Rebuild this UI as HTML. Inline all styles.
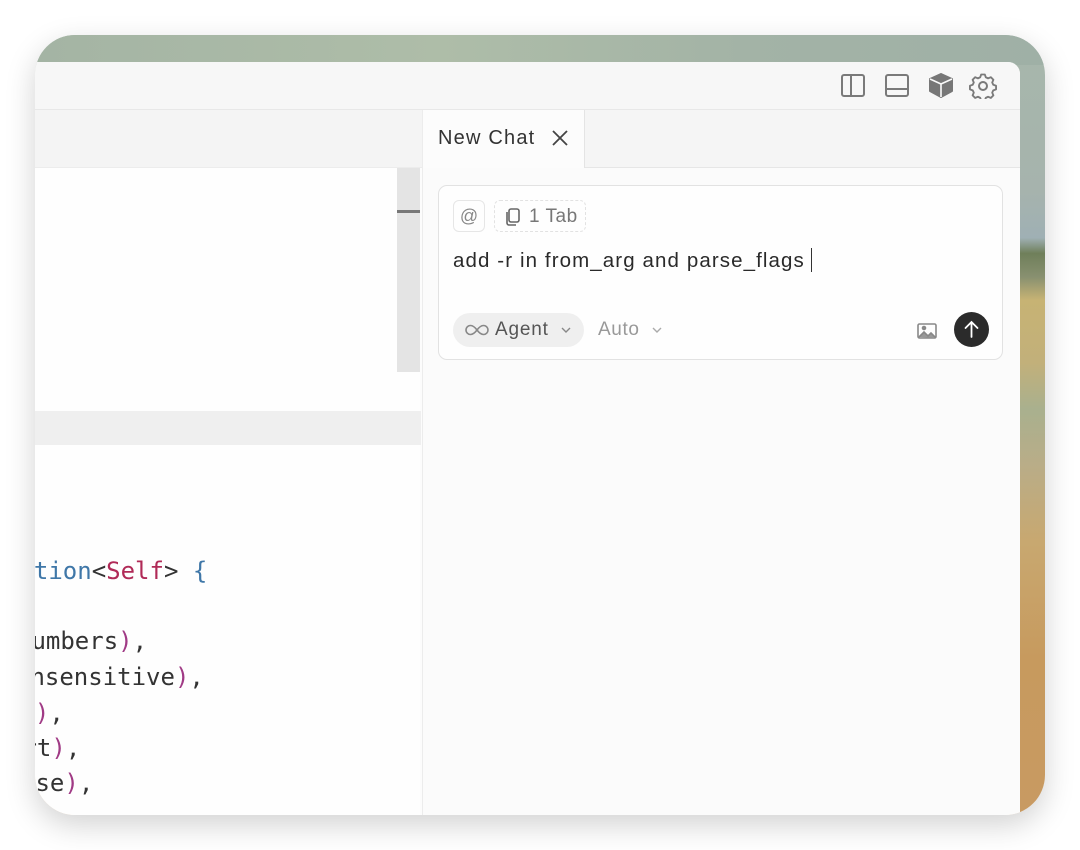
<!DOCTYPE html>
<html><head><meta charset="utf-8"><style>
*{margin:0;padding:0;box-sizing:border-box}
body{width:1080px;height:850px;background:#fff;position:relative;overflow:hidden;font-family:"Liberation Sans",sans-serif}
.frame{position:absolute;left:35px;top:35px;width:1010px;height:780px;border-radius:40px;overflow:hidden;
background:linear-gradient(180deg,#a7b7ab 0%,#a6b3ad 20%,#9fb0b4 26%,#6f7f5a 28%,#889070 31%,#c7b374 34%,#c2b07a 42%,#a9b08e 48%,#b9ad88 55%,#c8a870 65%,#c79a5e 80%,#c89a62 100%);
box-shadow:0 10px 30px rgba(0,0,0,.18)}
.frame:before{content:"";position:absolute;left:0;top:0;right:0;height:30px;background:linear-gradient(90deg,#a4b4a4,#aebda8 40%,#a3b3a6 70%,#9fb0a6)}
.win{position:absolute;left:0;top:27px;width:985px;height:753px;background:#fcfcfc;border-top-right-radius:12px;overflow:hidden}
.title{position:absolute;left:0;top:0;width:985px;height:48px;background:#f7f7f7;border-bottom:1px solid #e8e8e8}
.tabbar{position:absolute;left:0;top:48px;width:387px;height:58px;background:#f4f4f4;border-bottom:1px solid #ececec}
.editor{position:absolute;left:0;top:106px;width:385px;height:647px;background:#fefefe}
.sb{position:absolute;left:362px;top:106px;width:23px;height:204px;background:#e4e4e4}
.sb i{position:absolute;left:0;top:42px;width:23px;height:3px;background:#777}
.band{position:absolute;left:0;top:349px;width:386px;height:34px;background:#efefef}
.chat{position:absolute;left:387px;top:48px;width:598px;height:705px;background:#fbfbfb;border-left:1px solid #ececec}
.ctab{position:absolute;left:0;top:0;width:162px;height:58px;background:#fcfcfc;border-right:1px solid #e4e4e4;font-size:20px;color:#333;padding:17px 0 0 15px;letter-spacing:1.2px}
.ctabrest{position:absolute;left:162px;top:0;right:0;height:58px;background:#f5f5f5;border-bottom:1px solid #e6e6e6}
.box{position:absolute;left:15px;top:75px;width:565px;height:175px;border:1px solid #e2e2e2;border-radius:9px;background:#fefefe}
.code{position:absolute;font-family:"DejaVu Sans Mono","Liberation Mono",monospace;font-size:24px;color:#333;white-space:pre;line-height:30px}
.b{color:#3f77a8}.r{color:#b02a57}.p{color:#a03a85}
</style></head><body>
<div class="frame">
<div class="win">
 <div class="title">
  <svg style="position:absolute;left:806px;top:11px" width="160" height="26" viewBox="0 0 160 26" fill="none" stroke="#7a7a7a" stroke-width="2">
   <rect x="1" y="2" width="22" height="21" rx="2"/><line x1="10" y1="2" x2="10" y2="23"/>
   <rect x="45" y="2" width="22" height="21" rx="2"/><line x1="45" y1="16" x2="67" y2="16"/>
   <path d="M100 1 L111 6 L111 18 L100 24 L89 18 L89 6 Z" fill="#777" stroke="#777" stroke-linejoin="round"/>
   <path d="M89 6 L100 11 L111 6 M100 11 L100 24" stroke="#fafafa" stroke-width="1.6"/>
   <circle cx="142" cy="13" r="4"/>
   <path d="M140 1.5h4l1 3 2.5 1.2 3-1.3 2.8 2.8-1.3 3 1.2 2.5 3 1v4l-3 1-1.2 2.5 1.3 3-2.8 2.8-3-1.3-2.5 1.2-1 3h-4l-1-3-2.5-1.2-3 1.3-2.8-2.8 1.3-3-1.2-2.5-3-1v-4l3-1 1.2-2.5-1.3-3 2.8-2.8 3 1.3 2.5-1.2z" transform="translate(142 13) scale(.92) translate(-142 -13) translate(0 -1)" stroke-linejoin="round"/>
  </svg>
 </div>
 <div class="tabbar"></div>
 <div class="editor"></div>
 <div class="sb"><i></i></div>
 <div class="band"></div>
 <div class="code" style="left:-30px;top:494px"><span class="b">Option</span>&lt;<span class="r">Self</span>&gt; <span class="b">{</span></div>
 <div class="code" style="left:-18px;top:564px">Numbers<span class="p">)</span>,</div>
 <div class="code" style="left:-19px;top:600px">Insensitive<span class="p">)</span>,</div>
 <div class="code" style="left:-29px;top:636px">nt<span class="p">)</span>,</div>
 <div class="code" style="left:-27px;top:671px">art<span class="p">)</span>,</div>
 <div class="code" style="left:-14px;top:706px">ose<span class="p">)</span>,</div>
 <div class="chat">
  <div class="ctab">New Chat<span style="position:absolute;left:128px;top:19px"><svg width="18" height="18" viewBox="0 0 18 18" stroke="#444" stroke-width="1.8"><path d="M2 2L16 16M16 2L2 16"/></svg></span></div>
  <div class="ctabrest"></div>
  <div class="box">
   <div style="position:absolute;left:14px;top:14px;width:32px;height:32px;border:1px solid #e6e6e6;border-radius:6px;color:#888;font-size:18px;text-align:center;line-height:30px">@</div>
   <div style="position:absolute;left:55px;top:14px;width:92px;height:32px;border:1px dashed #e2e2e2;border-radius:6px;color:#777;font-size:19px;line-height:31px;padding-left:34px;letter-spacing:.5px">1 Tab
    <svg style="position:absolute;left:9px;top:7px" width="17" height="19" viewBox="0 0 17 19" fill="none" stroke="#666" stroke-width="1.6"><rect x="5" y="1" width="10" height="13" rx="2"/><path d="M3 4v11a2 2 0 0 0 2 2h7"/></svg></div>
   <div style="position:absolute;left:14px;top:62px;font-size:20.5px;letter-spacing:1.1px;color:#2a2a2a">add -r in from_arg and parse_flags<span style="display:inline-block;width:1px;height:24px;background:#333;margin-left:6px;vertical-align:-5px"></span></div>
   <div style="position:absolute;left:14px;top:127px;width:131px;height:34px;border-radius:17px;background:#efefef;color:#555;font-size:19px;line-height:34px;padding-left:42px;letter-spacing:.8px">Agent
    <svg style="position:absolute;left:12px;top:11px" width="24" height="12" viewBox="0 0 24 12" fill="none" stroke="#888" stroke-width="1.6"><path d="M12 6C9 2 7 1.5 5.5 1.5a4.5 4.5 0 0 0 0 9C7 10.5 9 10 12 6s5-4.5 6.5-4.5a4.5 4.5 0 0 1 0 9C17 10.5 15 10 12 6z"/></svg>
    <svg style="position:absolute;left:108px;top:14px" width="10" height="7" viewBox="0 0 10 7" fill="none" stroke="#888" stroke-width="1.4"><path d="M1 1l4 4 4-4"/></svg></div>
   <div style="position:absolute;left:159px;top:127px;color:#999;font-size:19px;line-height:34px;letter-spacing:.6px">Auto</div>
   <svg style="position:absolute;left:213px;top:141px" width="10" height="7" viewBox="0 0 10 7" fill="none" stroke="#aaa" stroke-width="1.4"><path d="M1 1l4 4 4-4"/></svg>
   <svg style="position:absolute;left:478px;top:137px" width="20" height="16" viewBox="0 0 20 16" fill="none" stroke="#888" stroke-width="1.6"><rect x="1" y="1" width="18" height="14" rx="1.5"/><path d="M2 14l5-5 4 4 3-3 5 5" fill="#999"/><circle cx="7" cy="5" r="1.5" fill="#888"/></svg>
   <div style="position:absolute;left:515px;top:126px;width:35px;height:35px;border-radius:50%;background:#2b2b2b">
    <svg style="position:absolute;left:9px;top:8px" width="17" height="19" viewBox="0 0 17 19" fill="none" stroke="#fff" stroke-width="1.8" stroke-linecap="round"><path d="M8.5 17V2M2.5 8l6-6 6 6"/></svg></div>
  </div>
 </div>
</div>
</div>
</body></html>
